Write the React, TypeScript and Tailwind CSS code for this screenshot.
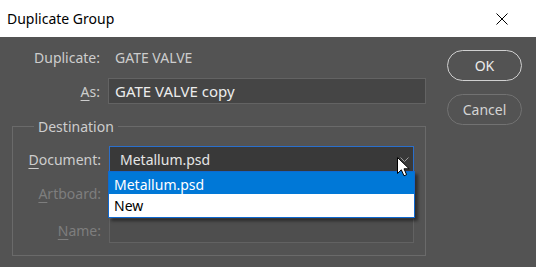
export default function App() {
  return (
    <div className="w-[536px] h-[267px] flex flex-col font-['Noto_Sans',sans-serif] text-[14px] overflow-hidden">
      <div className="h-[37px] shrink-0 bg-white flex items-center justify-between pl-[7px] pr-[28px]">
        <span className="text-black leading-none">Duplicate Group</span>
        <svg width="12" height="12" viewBox="0 0 12 12">
          <path d="M0.5 0.5 L11.5 11.5 M11.5 0.5 L0.5 11.5" stroke="#000" strokeWidth="1" />
        </svg>
      </div>
      <div className="flex-1 bg-[#535353] flex pl-[12px] pr-[14px] pt-[10px] gap-[21px]">
        <div className="w-[414px] flex flex-col">
          <div className="h-[20px] flex items-center">
            <span className="w-[88px] text-right text-[#cdcdcd]">Duplicate:</span>
            <span className="ml-[15px] text-[#cdcdcd]">GATE VALVE</span>
          </div>
          <div className="mt-[11px] h-[26px] flex items-center">
            <span className="w-[88px] text-right text-[#cdcdcd]">
              <span className="underline underline-offset-[3px]">A</span>s:
            </span>
            <div className="ml-[8px] flex-1 h-[26px] flex items-center border border-[#636363] bg-[#454545] pl-[6px] text-[15px] text-[#ececec]">
              GATE VALVE copy
            </div>
          </div>
          <fieldset className="mt-[13px] border border-[#6a6a6a] pt-[10px] pb-[12px] pr-[11px]">
            <legend className="ml-[21px] px-[4px] leading-[19px] text-[#cdcdcd]">Destination</legend>
            <div className="h-[26px] flex items-center">
              <span className="w-[88px] text-right text-[#cdcdcd]">
                <span className="underline underline-offset-[3px]">D</span>ocument:
              </span>
              <div className="relative ml-[8px] flex-1 h-[26px]">
                <div className="h-full flex items-center justify-between border border-[#2a6fcc] bg-[#393939] pl-[10px] pr-[4px] text-[#e6e6e6]">
                  <span>Metallum.psd</span>
                  <svg width="9" height="5" viewBox="0 0 9 5">
                    <path d="M0.5 0.5 L4.5 4.5 L8.5 0.5" fill="none" stroke="#9c9c9c" strokeWidth="1" />
                  </svg>
                </div>
                <div className="absolute left-[-1px] right-[-1px] top-[25px] z-10 border border-[#1068cf] bg-white shadow-[3px_3px_3px_rgba(0,0,0,0.45)]">
                  <div className="h-[22px] bg-[#0078d7] text-white pl-[5px] flex items-center pt-[2px]">Metallum.psd</div>
                  <div className="h-[23px] bg-white text-black pl-[5px] flex items-center">New</div>
                </div>
                <svg className="absolute left-[287px] top-[10px] z-20" width="14" height="21" viewBox="0 0 14 21">
                  <path
                    d="M1.5 1.5 L1.5 17.5 L5.3 13.8 L8 19.8 L10.6 18.7 L8 12.8 L13.2 12.8 Z"
                    fill="#fff"
                    stroke="#000"
                    strokeWidth="1"
                    strokeLinejoin="miter"
                  />
                </svg>
              </div>
            </div>
            <div className="mt-[8px] h-[26px] flex items-center">
              <span className="w-[88px] text-right text-[#7e7e7e]">
                <span className="underline underline-offset-[3px]">A</span>rtboard:
              </span>
              <div className="ml-[8px] flex-1 h-[26px] border border-[#626262] bg-[#4e4e4e]" />
            </div>
            <div className="mt-[12px] h-[25px] flex items-center">
              <span className="w-[88px] text-right text-[#7e7e7e]">
                <span className="underline underline-offset-[3px]">N</span>ame:
              </span>
              <div className="ml-[8px] flex-1 h-[25px] border border-[#626262] bg-[#4e4e4e]" />
            </div>
          </fieldset>
        </div>
        <div className="w-[75px] mt-[3px] flex flex-col gap-[13px]">
          <div className="h-[31px] rounded-full border-[1.5px] border-[#d0d0d0] flex items-center justify-center text-[#ececec]">
            OK
          </div>
          <div className="h-[31px] rounded-full border-[1.5px] border-[#727272] flex items-center justify-center text-[#d4d4d4]">
            Cancel
          </div>
        </div>
      </div>
    </div>
  );
}
